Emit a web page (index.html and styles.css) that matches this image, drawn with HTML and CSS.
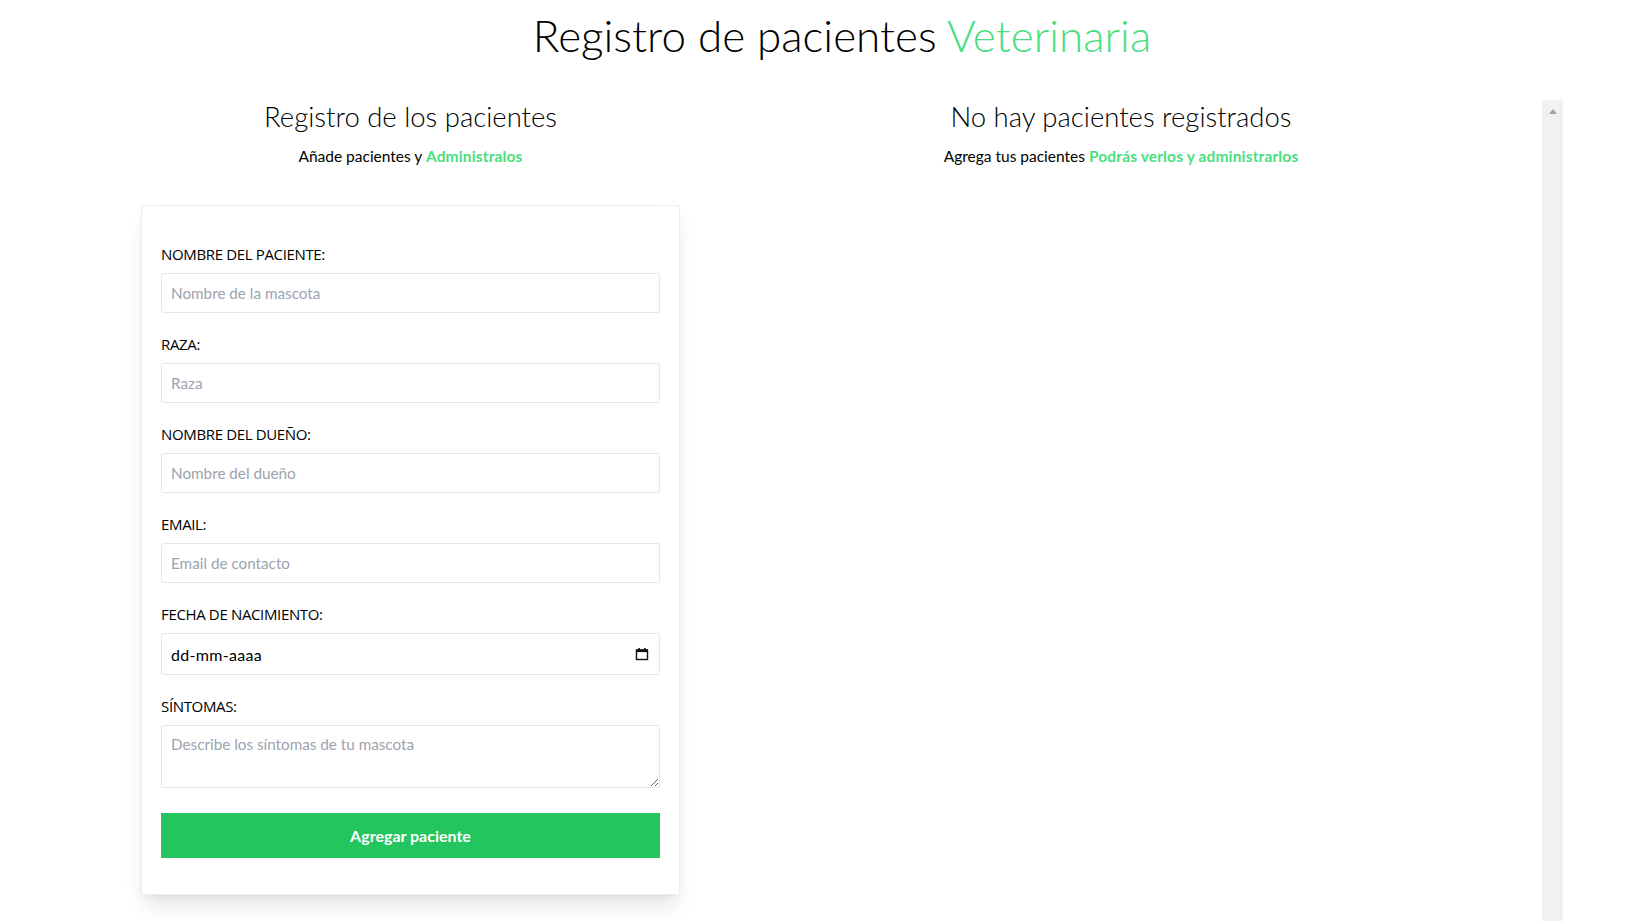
FILE: index.html
```html
<!DOCTYPE html>
<html lang="es">
<head>
<meta charset="utf-8">
<title>Registro de pacientes Veterinaria</title>
<link rel="stylesheet" href="styles.css">
</head>
<body>
<div class="page">
  <h1 class="title">Registro de pacientes <span class="accent">Veterinaria</span></h1>
  <div class="columns">
    <section class="form-col">
      <h2 class="col-title">Registro de los pacientes</h2>
      <p class="col-sub">Añade pacientes y <span class="accent-bold">Administralos</span></p>
      <form class="card">
        <div class="field">
          <label class="label" for="mascota">Nombre del paciente:</label>
          <input id="mascota" class="input" type="text" placeholder="Nombre de la mascota">
        </div>
        <div class="field">
          <label class="label" for="raza">Raza:</label>
          <input id="raza" class="input" type="text" placeholder="Raza">
        </div>
        <div class="field">
          <label class="label" for="propietario">Nombre del dueño:</label>
          <input id="propietario" class="input" type="text" placeholder="Nombre del dueño">
        </div>
        <div class="field">
          <label class="label" for="email">Email:</label>
          <input id="email" class="input" type="email" placeholder="Email de contacto">
        </div>
        <div class="field">
          <label class="label" for="fecha">Fecha de nacimiento:</label>
          <div id="fecha" class="input date-input">
            <span class="date-text">dd-mm-aaaa</span>
            <svg class="cal-icon" width="14" height="14" viewBox="0 0 14 14" aria-hidden="true">
              <rect x="1.5" y="3" width="11" height="9.5" fill="none" stroke="#111" stroke-width="1.4"/>
              <rect x="1" y="2.5" width="12" height="2.6" fill="#111"/>
              <rect x="3.3" y="1" width="1.6" height="2" fill="#111"/>
              <rect x="9.1" y="1" width="1.6" height="2" fill="#111"/>
            </svg>
          </div>
        </div>
        <div class="field field-last">
          <label class="label" for="sintomas">Síntomas:</label>
          <textarea id="sintomas" class="input textarea" placeholder="Describe los síntomas de tu mascota"></textarea>
        </div>
        <button class="submit" type="button">Agregar paciente</button>
      </form>
    </section>
    <section class="list-col">
      <div class="list-content">
        <h2 class="col-title">No hay pacientes registrados</h2>
        <p class="col-sub">Agrega tus pacientes <span class="accent-bold">Podrás verlos y administrarlos</span></p>
      </div>
      <div class="scrollbar"><span class="scroll-arrow"></span></div>
    </section>
  </div>
</div>
</body>
</html>
```
FILE: styles.css
```css
* { box-sizing: border-box; }

html, body {
  margin: 0;
  padding: 0;
  overflow: hidden;
  background: #ffffff;
}

body {
  font-family: "Lato", "Open Sans", sans-serif;
  color: #000;
  font-size: 16px;
}

.page {
  padding: 11px 80px 0 121px;
}

.title {
  margin: 0;
  font-size: 44px;
  line-height: 48px;
  font-weight: 300;
  text-align: center;
}

.accent { color: #4ade80; }

.columns {
  display: flex;
  align-items: flex-start;
  margin-top: 41px;
}

.form-col {
  width: 539px;
  margin: 0 20px;
  flex: none;
}

.col-title {
  margin: 0;
  padding-top: 1px;
  font-size: 27.5px;
  line-height: 32px;
  font-weight: 300;
  text-align: center;
}

.col-sub {
  margin: 11px 0 0;
  font-size: 15.5px;
  line-height: 24px;
  text-align: center;
}

.accent-bold {
  color: #4ade80;
  font-weight: 700;
  letter-spacing: 0.15px;
}

.card {
  margin-top: 37px;
  background: #fff;
  border: 1px solid #ededed;
  padding: 36px 19px 36px;
  box-shadow: 0 14px 20px -4px rgba(0,0,0,0.11), 0 4px 8px -4px rgba(0,0,0,0.08);
}

.field {
  margin-bottom: 19px;
}

.field-last { margin-bottom: 25px; }

.label {
  display: block;
  font-family: "Open Sans", "Lato", sans-serif;
  font-size: 15px;
  letter-spacing: -0.35px;
  line-height: 24px;
  text-transform: uppercase;
  margin-bottom: 7px;
  color: #000;
}

.input {
  display: block;
  width: 100%;
  height: 40px;
  margin: 0;
  padding: 8px 9px;
  border: 1px solid #e5e7eb;
  border-radius: 2px;
  font-family: inherit;
  font-size: 15.25px;
  color: #000;
  background: #fff;
  outline: none;
}

.input::placeholder { color: #9ca3af; }

.date-input {
  height: 42px;
  display: flex;
  align-items: center;
  justify-content: space-between;
  padding: 0 10px 0 9px;
}

.date-text {
  font-size: 16px;
  letter-spacing: 0.3px;
  color: #000;
}

.cal-icon { display: block; }

.textarea {
  height: 63px;
  resize: vertical;
  line-height: 21px;
  padding-top: 8px;
}

.submit {
  display: block;
  width: 100%;
  height: 45px;
  border: 0;
  background: #22c55e;
  color: #fff;
  font-family: inherit;
  font-size: 16px;
  font-weight: 700;
  cursor: pointer;
}

.list-col {
  flex: 1;
  display: flex;
  height: calc(100vh - 100px);
}

.list-content {
  flex: 1;
}

.scrollbar {
  width: 21px;
  flex: none;
  background: #f1f1f1;
  display: flex;
  justify-content: center;
  padding-top: 9px;
}

.scroll-arrow {
  width: 0;
  height: 0;
  border-left: 4.5px solid transparent;
  border-right: 4.5px solid transparent;
  border-bottom: 5px solid #a3a3a3;
}
```
